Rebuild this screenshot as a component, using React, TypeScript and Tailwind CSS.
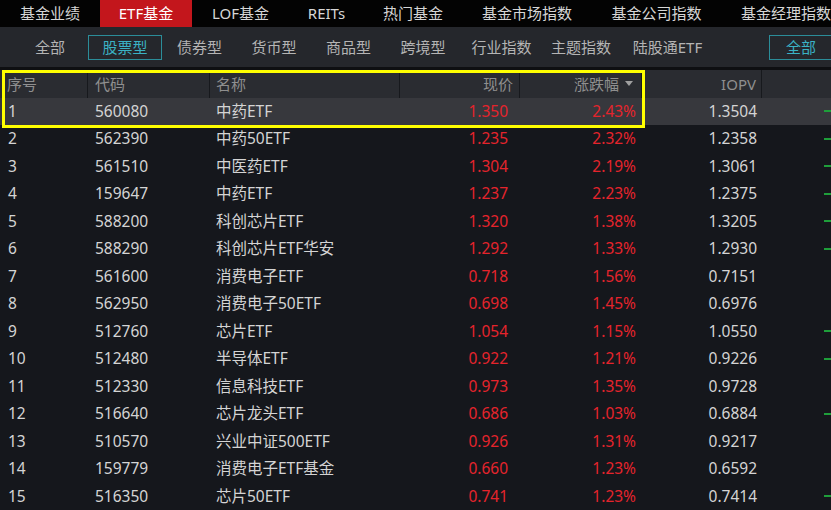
import React from "react";

const rows: [string, string, string, string, string, string, boolean][] = [
  ["1", "560080", "中药ETF", "1.350", "2.43%", "1.3504", true],
  ["2", "562390", "中药50ETF", "1.235", "2.32%", "1.2358", true],
  ["3", "561510", "中医药ETF", "1.304", "2.19%", "1.3061", true],
  ["4", "159647", "中药ETF", "1.237", "2.23%", "1.2375", true],
  ["5", "588200", "科创芯片ETF", "1.320", "1.38%", "1.3205", true],
  ["6", "588290", "科创芯片ETF华安", "1.292", "1.33%", "1.2930", true],
  ["7", "561600", "消费电子ETF", "0.718", "1.56%", "0.7151", false],
  ["8", "562950", "消费电子50ETF", "0.698", "1.45%", "0.6976", false],
  ["9", "512760", "芯片ETF", "1.054", "1.15%", "1.0550", true],
  ["10", "512480", "半导体ETF", "0.922", "1.21%", "0.9226", true],
  ["11", "512330", "信息科技ETF", "0.973", "1.35%", "0.9728", false],
  ["12", "516640", "芯片龙头ETF", "0.686", "1.03%", "0.6884", true],
  ["13", "510570", "兴业中证500ETF", "0.926", "1.31%", "0.9217", false],
  ["14", "159779", "消费电子ETF基金", "0.660", "1.23%", "0.6592", false],
  ["15", "516350", "芯片50ETF", "0.741", "1.23%", "0.7414", true],
];

const topTabs: { t: string; w: string }[] = [
  { t: "基金业绩", w: "w-[100px]" },
  { t: "ETF基金", w: "w-[92px]" },
  { t: "LOF基金", w: "w-[97px]" },
  { t: "REITs", w: "w-[75px]" },
  { t: "热门基金", w: "w-[98px]" },
  { t: "基金市场指数", w: "w-[130px]" },
  { t: "基金公司指数", w: "w-[129px]" },
  { t: "基金经理指数", w: "w-[130px]" },
];

const subTabs: { t: string; w: string; active?: boolean }[] = [
  { t: "全部", w: "w-[60px]" },
  { t: "股票型", w: "w-[74px]", active: true },
  { t: "债券型", w: "w-[75px]" },
  { t: "货币型", w: "w-[74px]" },
  { t: "商品型", w: "w-[75px]" },
  { t: "跨境型", w: "w-[74px]" },
  { t: "行业指数", w: "w-[83px]" },
  { t: "主题指数", w: "w-[76px]" },
  { t: "陆股通ETF", w: "w-[97px]" },
];

const grid = "grid grid-cols-[88px_122px_190px_120px_122px_120px_1fr]";

export default function App() {
  return (
    <div
      className="relative w-[831px] h-[510px] overflow-hidden bg-[#15171c] flex flex-col"
      style={{ fontFamily: '"Noto Sans", "Noto Sans CJK SC", sans-serif' }}
    >
      {/* top tabs */}
      <div className="h-[27px] bg-[#030303] flex shrink-0 whitespace-nowrap">
        {topTabs.map((t) => (
          <div
            key={t.t}
            className={
              "h-full flex items-center justify-center shrink-0 text-[15px] " +
              t.w +
              " " +
              (t.t === "ETF基金" ? "bg-[#c3161c] text-white" : "text-[#d6d6d6]")
            }
          >
            {t.t}
          </div>
        ))}
      </div>
      {/* sub tabs */}
      <div className="h-[40px] bg-[#25272c] flex items-center pl-[20px] shrink-0 whitespace-nowrap">
        {subTabs.map((s, i) => (
          <div
            key={s.t + i}
            className={
              "h-[25px] flex items-center justify-center text-[15px] shrink-0 " +
              s.w +
              (i === 1 ? " ml-[8px]" : "") +
              (s.active ? " border border-[#2b8d99] text-[#3bb2c4]" : " text-[#b4b4b4]")
            }
          >
            {s.t}
          </div>
        ))}
        <div className="ml-[53px] w-[72px] shrink-0 h-[25px] border border-[#2b8d99] text-[#3bb2c4] text-[15px] flex items-center justify-center pr-[8px]">
          全部
        </div>
      </div>
      <div className="h-[3px] bg-[#0e0f12] shrink-0" />
      {/* header */}
      <div className={grid + " h-[27.5px] bg-[#2a2c31] text-[15px] text-[#8f8f8f] shrink-0"}>
        <div className="flex items-center pl-[7px] border-r border-[#17191d]">序号</div>
        <div className="flex items-center pl-[7px] border-r border-[#17191d]">代码</div>
        <div className="flex items-center pl-[6px] border-r border-[#17191d]">名称</div>
        <div className="flex items-center justify-end pr-[6px] border-r border-[#17191d]">现价</div>
        <div className="flex items-center justify-end pr-[8px] border-r border-[#17191d]">
          涨跌幅
          <svg width="8" height="5" viewBox="0 0 8 5" className="ml-[6px]">
            <path d="M0 0 L8 0 L4 5 Z" fill="#a0a0a0" />
          </svg>
        </div>
        <div className="flex items-center justify-end pr-[5px] border-r border-[#17191d]">IOPV</div>
        <div />
      </div>
      {/* rows */}
      {rows.map((r, i) => (
        <div
          key={r[0]}
          className={
            grid +
            " h-[27.5px] shrink-0 text-[15.5px] text-[#d4d4d4] " +
            (i === 0 ? "bg-[#37383d]" : "")
          }
        >
          <div className="flex items-center pl-[8px]">{r[0]}</div>
          <div className="flex items-center pl-[7px]">{r[1]}</div>
          <div className="flex items-center pl-[6px] whitespace-nowrap">{r[2]}</div>
          <div className="flex items-center justify-end pr-[12px] text-[#e5242c]">{r[3]}</div>
          <div className="flex items-center justify-end pr-[6px] text-[#e5242c]">{r[4]}</div>
          <div className="flex items-center justify-end pr-[5px]">{r[5]}</div>
          <div className="flex items-center justify-end">
            {r[6] && <div className="w-[7px] h-[2px] bg-[#1e9e3a]" />}
          </div>
        </div>
      ))}
      {/* yellow annotation */}
      <div className="absolute left-[2px] top-[70px] w-[643px] h-[58px] border-[3px] border-[#ffff00] pointer-events-none" />
    </div>
  );
}
